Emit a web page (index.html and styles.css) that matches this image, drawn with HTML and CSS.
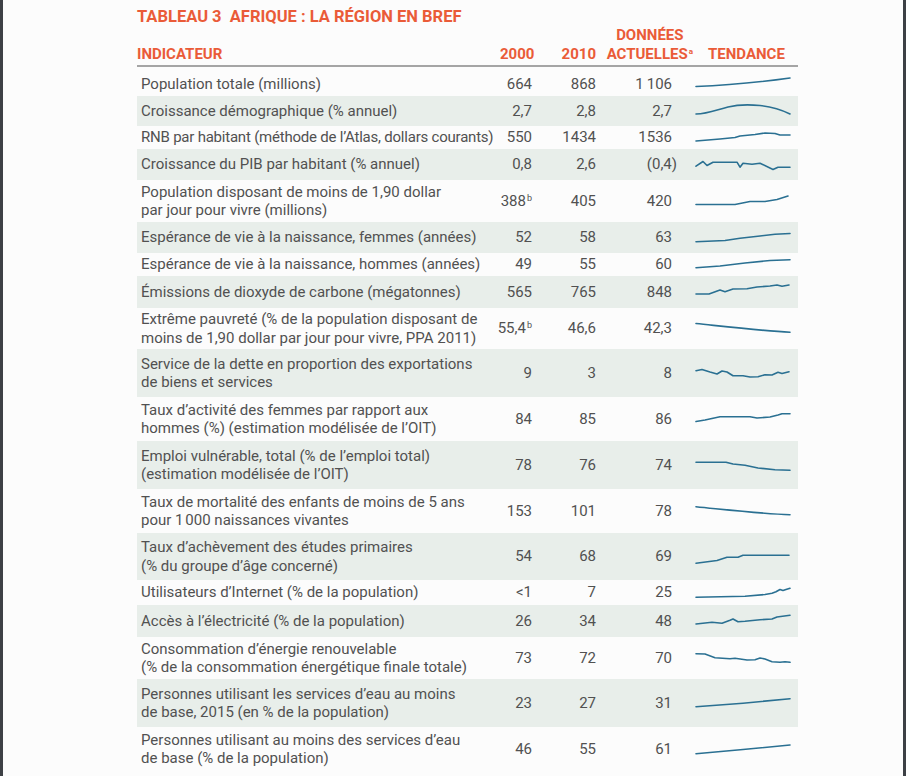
FILE: index.html
```html
<!DOCTYPE html>
<html lang="fr">
<head>
<meta charset="utf-8">
<title>Tableau 3 Afrique</title>
<link rel="stylesheet" href="styles.css">
</head>
<body>
<div class="frame">
  <div class="content">
    <h1 class="title">TABLEAU 3&nbsp; AFRIQUE : LA RÉGION EN BREF</h1>
    <div class="head">
      <div class="h-ind">INDICATEUR</div>
      <div class="h-num">2000</div>
      <div class="h-num">2010</div>
      <div class="h-cur"><span class="h-stack">DONNÉES<br>ACTUELLES<sup class="sup-a">a</sup></span></div>
      <div class="h-trend">TENDANCE</div>
    </div>

    <div class="row h24">
      <div class="lab">Population totale (millions)</div>
      <div class="num">664</div><div class="num">868</div><div class="num">1&#8201;106</div>
      <div class="spark"><svg viewBox="0 0 100 20"><path d="M2 12.5 C 30 11.5, 60 9, 96 4"/></svg></div>
    </div>
    <div class="row alt h30">
      <div class="lab">Croissance démographique (% annuel)</div>
      <div class="num">2,7</div><div class="num">2,8</div><div class="num">2,7</div>
      <div class="spark"><svg viewBox="0 0 100 20"><path d="M2 13 C 14 13, 22 9, 34 6 S 56 3.5, 66 4.5 S 86 8, 96 13"/></svg></div>
    </div>
    <div class="row h23">
      <div class="lab tight">RNB par habitant (méthode de l’Atlas, dollars courants)</div>
      <div class="num">550</div><div class="num">1434</div><div class="num">1536</div>
      <div class="spark"><svg viewBox="0 0 100 20"><polyline points="2,13 26,11 41,9.5 46,8 61,6.5 71,5 81,5.5 86,7 96,7"/></svg></div>
    </div>
    <div class="row alt h31">
      <div class="lab">Croissance du PIB par habitant (% annuel)</div>
      <div class="num">0,8</div><div class="num">2,6</div><div class="num paren">(0,4)</div>
      <div class="spark"><svg viewBox="0 0 100 20"><polyline points="2,11.2 9,6.5 13,10.5 19,7.2 43,7.2 46,12.2 49,8.2 58,9.2 66,8.2 79,14.5 84,12.2 96,12.2"/></svg></div>
    </div>
    <div class="row h42">
      <div class="lab">Population disposant de moins de 1,90 dollar<br>par jour pour vivre (millions)</div>
      <div class="num">388<sup class="sup-b">b</sup></div><div class="num">405</div><div class="num">420</div>
      <div class="spark"><svg viewBox="0 0 100 20"><polyline points="2,13.5 41,13.5 56,10.5 71,10.5 83,8.5 94,5"/></svg></div>
    </div>
    <div class="row alt h31">
      <div class="lab">Espérance de vie à la naissance, femmes (années)</div>
      <div class="num">52</div><div class="num">58</div><div class="num">63</div>
      <div class="spark"><svg viewBox="0 0 100 20"><polyline points="2,13.8 31,12.5 46,10.2 66,8 81,6.2 96,5.5"/></svg></div>
    </div>
    <div class="row h23">
      <div class="lab">Espérance de vie à la naissance, hommes (années)</div>
      <div class="num">49</div><div class="num">55</div><div class="num">60</div>
      <div class="spark"><svg viewBox="0 0 100 20"><polyline points="2,12.8 26,11 51,8 76,5.5 96,4.8"/></svg></div>
    </div>
    <div class="row alt h32">
      <div class="lab">Émissions de dioxyde de carbone (mégatonnes)</div>
      <div class="num">565</div><div class="num">765</div><div class="num">848</div>
      <div class="spark"><svg viewBox="0 0 100 20"><polyline points="2,12 15,12 26,8 31,9.7 39,7 53,6.7 63,5 76,4 83,3 88,4.3 95,3"/></svg></div>
    </div>
    <div class="row h41">
      <div class="lab">Extrême pauvreté (% de la population disposant de<br>moins de 1,90 dollar par jour pour vivre, PPA 2011)</div>
      <div class="num">55,4<sup class="sup-b">b</sup></div><div class="num">46,6</div><div class="num">42,3</div>
      <div class="spark"><svg viewBox="0 0 100 20"><path d="M2 4.5 C 40 8.5, 70 12, 96 13.2"/></svg></div>
    </div>
    <div class="row alt h48">
      <div class="lab">Service de la dette en proportion des exportations<br>de biens et services</div>
      <div class="num">9</div><div class="num">3</div><div class="num">8</div>
      <div class="spark"><svg viewBox="0 0 100 20"><polyline points="2,7.7 8,6.5 16,9 23,11 28,8 33,9 39,12.7 49,12.7 56,14 64,13.7 71,11.7 78,12 84,9.3 88,10.5 95,8.7"/></svg></div>
    </div>
    <div class="row h44">
      <div class="lab">Taux d’activité des femmes par rapport aux<br>hommes (%) (estimation modélisée de l’OIT)</div>
      <div class="num">84</div><div class="num">85</div><div class="num">86</div>
      <div class="spark"><svg viewBox="0 0 100 20"><polyline points="2,12.5 11,11 26,7.7 56,7.7 63,9 76,8 84,6 88,4.7 96,4.7"/></svg></div>
    </div>
    <div class="row alt h48">
      <div class="lab">Emploi vulnérable, total (% de l’emploi total)<br>(estimation modélisée de l’OIT)</div>
      <div class="num">78</div><div class="num">76</div><div class="num">74</div>
      <div class="spark"><svg viewBox="0 0 100 20"><polyline points="2,7.3 32,7.3 39,9 51,10.3 64,13 81,14.7 96,15.3"/></svg></div>
    </div>
    <div class="row h44">
      <div class="lab">Taux de mortalité des enfants de moins de 5 ans<br>pour 1&#8201;000 naissances vivantes</div>
      <div class="num">153</div><div class="num">101</div><div class="num">78</div>
      <div class="spark"><svg viewBox="0 0 100 20"><path d="M2 5.7 C 40 9.5, 70 13, 96 13.7"/></svg></div>
    </div>
    <div class="row alt h47">
      <div class="lab">Taux d’achèvement des études primaires<br>(% du groupe d’âge concerné)</div>
      <div class="num">54</div><div class="num">68</div><div class="num">69</div>
      <div class="spark"><svg viewBox="0 0 100 20"><polyline points="2,16.2 23,13.5 33,10.2 44,10.2 49,8.2 95,8.2"/></svg></div>
    </div>
    <div class="row h25">
      <div class="lab">Utilisateurs d’Internet (% de la population)</div>
      <div class="num">&lt;1</div><div class="num">7</div><div class="num">25</div>
      <div class="spark"><svg viewBox="0 0 100 20"><polyline points="2,14.2 51,13.2 71,11.5 78,10.2 82,8.8 86,6.5 89,7.5 92,6.5 96,5.2"/></svg></div>
    </div>
    <div class="row alt h32">
      <div class="lab">Accès à l’électricité (% de la population)</div>
      <div class="num">26</div><div class="num">34</div><div class="num">48</div>
      <div class="spark"><svg viewBox="0 0 100 20"><polyline points="2,13 18,11.3 28,12.3 36,9.3 39,8 44,10.7 51,10.3 66,8.7 78,8 83,6 96,4.3"/></svg></div>
    </div>
    <div class="row h42">
      <div class="lab">Consommation d’énergie renouvelable<br>(% de la consommation énergétique finale totale)</div>
      <div class="num">73</div><div class="num">72</div><div class="num">70</div>
      <div class="spark"><svg viewBox="0 0 100 20"><polyline points="2,5.7 11,6 21,9.7 36,10.7 41,10.3 53,12 61,11.7 66,10 71,11 78,13.7 86,14.3 91,13.7 96,14.3"/></svg></div>
    </div>
    <div class="row alt h48">
      <div class="lab">Personnes utilisant les services d’eau au moins<br>de base, 2015 (en % de la population)</div>
      <div class="num">23</div><div class="num">27</div><div class="num">31</div>
      <div class="spark"><svg viewBox="0 0 100 20"><polyline points="2,13.7 49,10.2 96,5.7"/></svg></div>
    </div>
    <div class="row h44">
      <div class="lab">Personnes utilisant au moins des services d’eau<br>de base (% de la population)</div>
      <div class="num">46</div><div class="num">55</div><div class="num">61</div>
      <div class="spark"><svg viewBox="0 0 100 20"><polyline points="2,14.7 49,10.5 96,6"/></svg></div>
    </div>
  </div>
</div>
</body>
</html>
```

FILE: styles.css
```css
* { box-sizing: border-box; }
html, body { margin: 0; padding: 0; }
body {
  background: #fcfcfc;
  font-family: Roboto, "Liberation Sans", sans-serif;
  color: #515151;
  overflow: hidden;
}
.frame {
  width: 906px;
  height: 776px;
  border-left: 3px solid #3d4045;
  border-right: 3px solid #3d4045;
  overflow: hidden;
}
.content {
  margin-left: 134px;
  width: 661px;
}
.title {
  margin: 0;
  padding-top: 7px;
  font-size: 16.5px;
  line-height: 19px;
  font-weight: 700;
  color: #ea5b38;
  white-space: nowrap;
}
.head {
  display: grid;
  grid-template-columns: 363px 32px 64px 97px 105px;
  align-items: end;
  font-size: 15px;
  line-height: 18.5px;
  font-weight: 700;
  color: #ea5b38;
  padding-bottom: 2px;
  border-bottom: 2px solid #a5a5a5;
  margin-bottom: 5px;
}
.h-num { text-align: right; }
.h-cur { text-align: right; }
.h-stack { display: inline-block; text-align: center; }
.h-trend { padding-left: 15px; }
.sup-a {
  font-size: 8px;
  line-height: 0;
  vertical-align: 5px;
  margin-left: 1px;
}
.row {
  display: grid;
  grid-template-columns: 363px 32px 64px 76px 126px;
  align-items: center;
  font-size: 15px;
  line-height: 18.5px;
  background: #fcfcfc;
}
.row.alt { background: #e8eeea; }
.h23 { height: 23px; }
.h24 { height: 24px; }
.h25 { height: 25px; }
.h30 { height: 30px; }
.h31 { height: 31px; }
.h32 { height: 32px; }
.h41 { height: 41px; }
.h42 { height: 42px; }
.h44 { height: 44px; }
.h47 { height: 47px; }
.h48 { height: 48px; }
.lab {
  padding-left: 4px;
  white-space: nowrap;
}
.lab.tight { letter-spacing: -0.22px; }
.num {
  display: flex;
  justify-content: flex-end;
  align-items: baseline;
  white-space: nowrap;
}
.num.paren { margin-right: -5px; }
.sup-b {
  font-size: 9px;
  line-height: 0;
  position: relative;
  top: -5px;
  margin-left: 1px;
}
.spark {
  padding-left: 22px;
  height: 20px;
}
.spark svg {
  display: block;
  width: 100px;
  height: 20px;
  overflow: visible;
}
.spark polyline, .spark path {
  fill: none;
  stroke: #2a7092;
  stroke-width: 1.6;
  stroke-linejoin: round;
  stroke-linecap: round;
}
```
